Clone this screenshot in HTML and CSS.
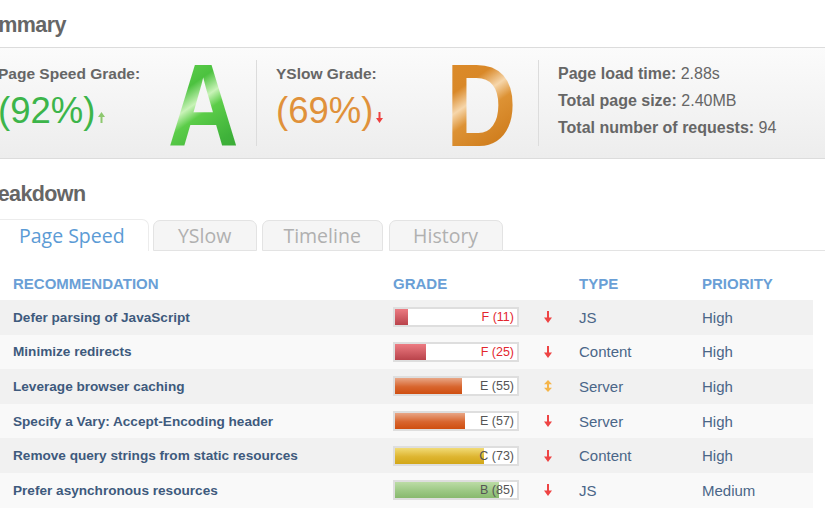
FILE: index.html
```html
<!DOCTYPE html>
<html>
<head>
<meta charset="utf-8">
<link rel="stylesheet" href="styles.css">
</head>
<body>
<h2 class="heading heading-summary">Summary</h2>
<section class="summary">
  <div class="grade-text first">
    <div class="grade-label">Page Speed Grade:</div>
    <div class="grade-pct good">(92%)<svg class="trend" width="7" height="11" viewBox="0 0 7 11"><path d="M3.5 0 L7 5 L4.5 5 L4.5 11 L2.5 11 L2.5 5 L0 5 Z" fill="#8dc86f"/></svg></div>
  </div>
  <div class="letter-box a-box"><span class="letter letter-a">A</span></div>
  <div class="divider"></div>
  <div class="grade-text second">
    <div class="grade-label">YSlow Grade:</div>
    <div class="grade-pct warn">(69%)<svg class="trend" width="7" height="11" viewBox="0 0 7 11"><path d="M3.5 11 L7 6 L4.5 6 L4.5 0 L2.5 0 L2.5 6 L0 6 Z" fill="#ee4040"/></svg></div>
  </div>
  <div class="letter-box d-box"><span class="letter letter-d">D</span></div>
  <div class="divider"></div>
  <div class="stats">
    <div><b>Page load time:</b> 2.88s</div>
    <div><b>Total page size:</b> 2.40MB</div>
    <div><b>Total number of requests:</b> 94</div>
  </div>
</section>

<h2 class="heading heading-breakdown">Breakdown</h2>
<nav class="tabs">
  <div class="tab active">Page Speed</div>
  <div class="tab">YSlow</div>
  <div class="tab">Timeline</div>
  <div class="tab">History</div>
  <div class="tab-rest"></div>
</nav>

<div class="table">
  <div class="thead">
    <div class="c-rec">RECOMMENDATION</div>
    <div class="c-grade">GRADE</div>
    <div class="c-arrow"></div>
    <div class="c-type">TYPE</div>
    <div class="c-prio">PRIORITY</div>
  </div>

  <div class="row odd">
    <div class="c-rec">Defer parsing of JavaScript</div>
    <div class="c-grade"><div class="bar"><div class="fill f-red" style="width:11%"></div><span class="bar-text red">F (11)</span></div></div>
    <div class="c-arrow"><svg width="8" height="12" viewBox="0 0 8 12"><path d="M4 12 L8 6.5 L5 6.5 L5 0 L3 0 L3 6.5 L0 6.5 Z" fill="#ee4444"/></svg></div>
    <div class="c-type">JS</div>
    <div class="c-prio">High</div>
  </div>
  <div class="row even">
    <div class="c-rec">Minimize redirects</div>
    <div class="c-grade"><div class="bar"><div class="fill f-red" style="width:25%"></div><span class="bar-text red">F (25)</span></div></div>
    <div class="c-arrow"><svg width="8" height="12" viewBox="0 0 8 12"><path d="M4 12 L8 6.5 L5 6.5 L5 0 L3 0 L3 6.5 L0 6.5 Z" fill="#ee4444"/></svg></div>
    <div class="c-type">Content</div>
    <div class="c-prio">High</div>
  </div>
  <div class="row odd">
    <div class="c-rec">Leverage browser caching</div>
    <div class="c-grade"><div class="bar"><div class="fill f-orange" style="width:55%"></div><span class="bar-text">E (55)</span></div></div>
    <div class="c-arrow"><svg width="8" height="12" viewBox="0 0 8 12"><path d="M4 0 L8 4.2 L5 4.2 L5 7.8 L8 7.8 L4 12 L0 7.8 L3 7.8 L3 4.2 L0 4.2 Z" fill="#f5b54a"/></svg></div>
    <div class="c-type">Server</div>
    <div class="c-prio">High</div>
  </div>
  <div class="row even">
    <div class="c-rec">Specify a Vary: Accept-Encoding header</div>
    <div class="c-grade"><div class="bar"><div class="fill f-orange" style="width:57%"></div><span class="bar-text">E (57)</span></div></div>
    <div class="c-arrow"><svg width="8" height="12" viewBox="0 0 8 12"><path d="M4 12 L8 6.5 L5 6.5 L5 0 L3 0 L3 6.5 L0 6.5 Z" fill="#ee4444"/></svg></div>
    <div class="c-type">Server</div>
    <div class="c-prio">High</div>
  </div>
  <div class="row odd">
    <div class="c-rec">Remove query strings from static resources</div>
    <div class="c-grade"><div class="bar"><div class="fill f-yellow" style="width:73%"></div><span class="bar-text">C (73)</span></div></div>
    <div class="c-arrow"><svg width="8" height="12" viewBox="0 0 8 12"><path d="M4 12 L8 6.5 L5 6.5 L5 0 L3 0 L3 6.5 L0 6.5 Z" fill="#ee4444"/></svg></div>
    <div class="c-type">Content</div>
    <div class="c-prio">High</div>
  </div>
  <div class="row even">
    <div class="c-rec">Prefer asynchronous resources</div>
    <div class="c-grade"><div class="bar"><div class="fill f-green" style="width:85%"></div><span class="bar-text">B (85)</span></div></div>
    <div class="c-arrow"><svg width="8" height="12" viewBox="0 0 8 12"><path d="M4 12 L8 6.5 L5 6.5 L5 0 L3 0 L3 6.5 L0 6.5 Z" fill="#ee4444"/></svg></div>
    <div class="c-type">JS</div>
    <div class="c-prio">Medium</div>
  </div>
</div>
</body>
</html>
```

FILE: styles.css
```css
html, body {
  margin: 0;
  padding: 0;
  background: #fff;
  overflow: hidden;
}
body {
  font-family: "Liberation Sans", Arial, sans-serif;
  color: #666;
  width: 825px;
  height: 510px;
}

.heading {
  margin: 0;
  font-size: 21.5px;
  line-height: 25px;
  font-weight: bold;
  letter-spacing: -0.6px;
  color: #666;
}
.heading-summary {
  padding-top: 13px;
  margin-left: -28px;
  margin-bottom: 9px;
}
.heading-breakdown {
  margin-top: 23px;
  margin-left: -25px;
  margin-bottom: 12px;
}

/* Summary */
.summary {
  display: flex;
  height: 110px;
  border-top: 1px solid #dcdcdc;
  border-bottom: 1px solid #dcdcdc;
  background: linear-gradient(#fbfbfb, #ededed);
}
.grade-text {
  padding-top: 17px;
}
.grade-text.first {
  margin-left: -2px;
  width: 170px;
}
.grade-text.second {
  margin-left: 19px;
  width: 174px;
}
.grade-label {
  font-size: 15.5px;
  line-height: 18px;
  font-weight: bold;
  color: #666;
}
.grade-pct {
  margin-top: 8px;
  font-size: 36.5px;
  line-height: 40px;
}
.grade-pct.good { color: #3cb54a; }
.grade-pct.warn { color: #e0913a; }
.trend {
  margin-left: 3px;
}

.letter-box {
  display: flex;
  justify-content: center;
  padding-top: 8px;
}
.a-box { width: 70px; margin-right: 18px; }
.d-box { width: 62px; margin-right: 26px; }
.letter {
  display: block;
  font-family: "Liberation Sans", Arial, sans-serif;
  font-weight: bold;
  font-size: 117px;
  line-height: 100px;
  transform: scaleX(0.84);
  -webkit-background-clip: text;
  background-clip: text;
  color: transparent;
}
.letter-a {
  background-image: linear-gradient(150deg, #6ad455 0%, #4cc23f 30%, #c9f3b8 44%, #5ccd49 54%, #3fb23a 80%, #36a633 100%);
}
.letter-d {
  background-image: linear-gradient(150deg, #dc8b2a 0%, #d98828 28%, #f6d6aa 42%, #dd9234 54%, #d07e1e 80%, #c9761a 100%);
}

.divider {
  width: 1px;
  background: #dcdcdc;
  margin: 12px 0;
}
.stats {
  margin-left: 19px;
  padding-top: 12px;
  font-size: 16px;
  line-height: 27px;
  color: #666;
}

/* Tabs */
.tabs {
  display: flex;
  align-items: flex-end;
  height: 32px;
  margin-left: -6px;
}
.tab {
  height: 31px;
  box-sizing: border-box;
  padding: 0 23px 0 24px;
  margin-right: 4px;
  font-family: "Open Sans", "Noto Sans", sans-serif;
  font-size: 19.5px;
  line-height: 30px;
  color: #b0b0b0;
  background: #f5f5f5;
  border: 1px solid #e3e3e3;
  border-radius: 7px 7px 0 0;
}
.tab.active {
  height: 32px;
  color: #5b9bd5;
  background: #fff;
  border-color: #ececec;
  border-bottom: none;
  line-height: 31px;
}
.tab:nth-child(2) { width: 104px; text-align: center; padding: 0; margin-right: 5px; }
.tab:nth-child(3) { width: 121px; text-align: center; padding: 0; margin-right: 6px; }
.tab:nth-child(4) { width: 114px; text-align: center; padding: 0; margin-right: 0; }
.tab-rest {
  flex: 1;
  border-bottom: 1px solid #e3e3e3;
}

/* Table */
.table {
  width: 813px;
}
.thead, .row {
  display: grid;
  grid-template-columns: 393px 150px 36px 123px 111px;
  align-items: center;
}
.thead {
  padding-top: 25px;
  padding-bottom: 8px;
  font-size: 15px;
  line-height: 16px;
  font-weight: bold;
  color: #6a9fd6;
}
.thead .c-rec { padding-left: 13px; }
.row {
  height: 34.6px;
}
.row.odd { background: #f1f1f1; }
.row.even { background: #f9f9f9; }
.row .c-rec {
  padding-left: 13px;
  font-size: 13.6px;
  font-weight: bold;
  color: #3e5a7d;
}
.c-arrow {
  padding-left: 1px;
  display: flex;
  align-items: center;
}
.row .c-type, .row .c-prio {
  font-size: 15px;
  color: #4a6688;
}
.bar {
  position: relative;
  width: 126px;
  height: 20px;
  box-sizing: border-box;
  border: 2px solid #dedede;
  background: #fff;
}
.fill {
  height: 100%;
}
.f-red { background: linear-gradient(#ec7b82, #b9434b); }
.f-orange { background: linear-gradient(#e8a686, #d8652e 55%, #cf4e10); }
.f-yellow { background: linear-gradient(#f1db76, #deb530 55%, #d2a718); }
.f-green { background: linear-gradient(#bcdca6, #9cc884 55%, #88b96e); }
.bar-text {
  position: absolute;
  right: 3px;
  top: 0;
  font-size: 12.5px;
  line-height: 16px;
  color: #555;
}
.bar-text.red { color: #e3262e; }
```
